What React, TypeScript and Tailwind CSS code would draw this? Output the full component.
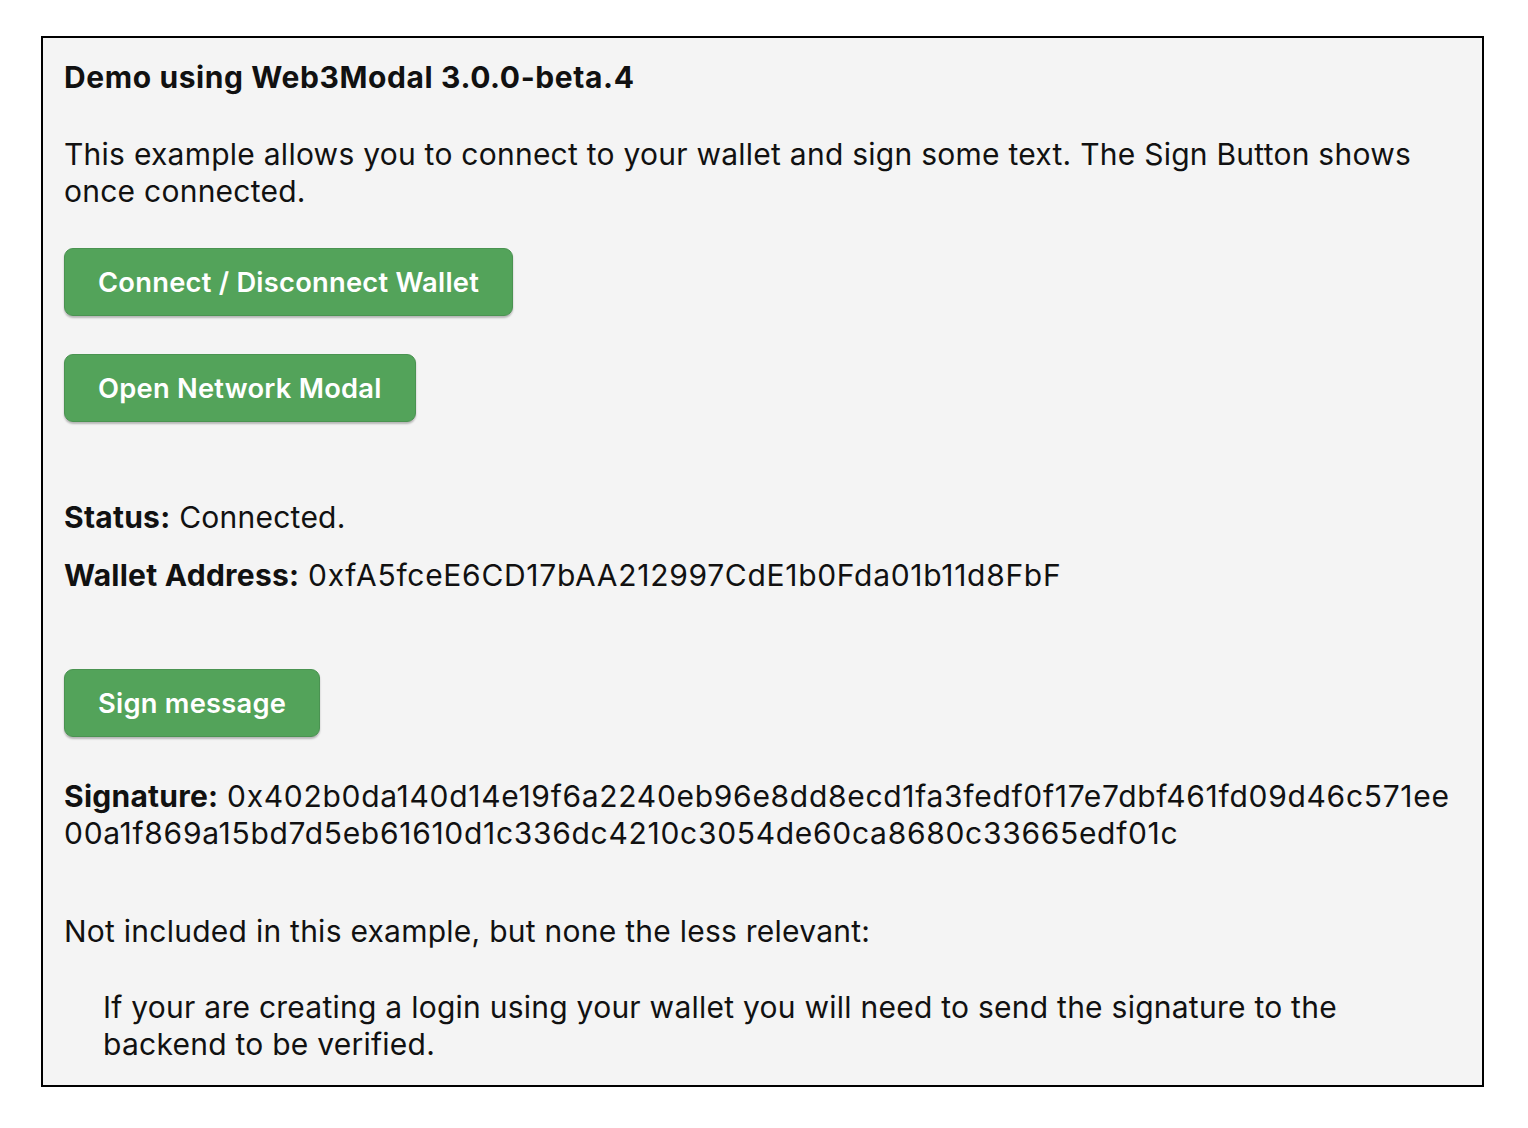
const Btn = ({ children }: { children: React.ReactNode }) => (
  <button className="h-[68px] self-start rounded-[9px] border border-[#4a9351] bg-[#53a35a] px-[33px] text-[27.3px] font-semibold text-white shadow-[0_2px_2px_rgba(0,0,0,0.25)]">
    {children}
  </button>
);

export default function App() {
  return (
    <div className="min-h-screen bg-white pt-9 pl-[41px] pr-[44px] font-['Inter',sans-serif] text-[30px] leading-[37px] tracking-[0.25px] text-[#111]">
      <div className="flex h-[1051px] flex-col border-2 border-black bg-[#f4f4f4] px-[21px] pt-[21px]">
        <h1 className="font-bold tracking-[0.6px]">Demo using Web3Modal 3.0.0-beta.4</h1>
        <p className="mt-[40px]">
          This example allows you to connect to your wallet and sign some text. The Sign Button shows
          once connected.
        </p>
        <div className="mt-[38px] flex flex-col gap-[38px]">
          <Btn>Connect / Disconnect Wallet</Btn>
          <Btn>Open Network Modal</Btn>
        </div>
        <p className="mt-[77px]">
          <b>Status:</b> Connected.
        </p>
        <p className="mt-[21px]">
          <b>Wallet Address:</b>{' '}
          <span className="tracking-[0.7px]">0xfA5fceE6CD17bAA212997CdE1b0Fda01b11d8FbF</span>
        </p>
        <div className="mt-[75px] flex">
          <Btn>Sign message</Btn>
        </div>
        <p className="mt-[41px]">
          <b>Signature:</b>{' '}
          <span className="tracking-[0.7px]">
            0x402b0da140d14e19f6a2240eb96e8dd8ecd1fa3fedf0f17e7dbf461fd09d46c571ee
            <br />
            00a1f869a15bd7d5eb61610d1c336dc4210c3054de60ca8680c33665edf01c
          </span>
        </p>
        <p className="mt-[61px]">Not included in this example, but none the less relevant:</p>
        <p className="mt-[39px] pl-[39px]">
          If your are creating a login using your wallet you will need to send the signature to the
          <br />
          backend to be verified.
        </p>
      </div>
    </div>
  );
}
